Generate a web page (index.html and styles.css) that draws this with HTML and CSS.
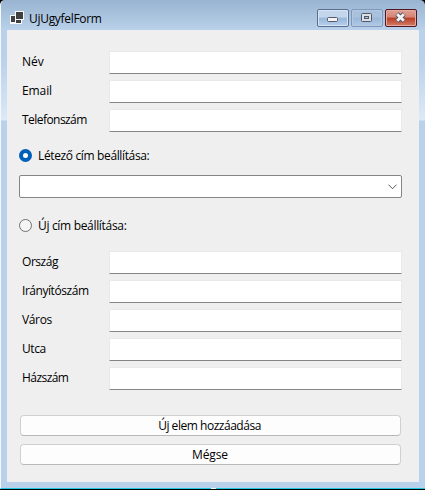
FILE: index.html
```html
<!DOCTYPE html>
<html lang="hu">
<head>
<meta charset="utf-8">
<title>UjUgyfelForm</title>
<link rel="stylesheet" href="styles.css">
</head>
<body>
<div class="window">
  <header class="titlebar">
    <svg class="app-icon" width="14" height="14" viewBox="0 0 14 14" shape-rendering="crispEdges">
      <path fill="#f6f8fb" d="M5 0h9v9h-2v4H0V4h5z"/>
      <path fill="#3f3f3f" d="M6 1h7v7H6zM1 5h4v6H1zM6 9h5v3H6z"/>
    </svg>
    <h1 class="title"><span class="fit t-title">UjUgyfelForm</span></h1>
    <div class="caption-buttons">
      <button class="cap" aria-label="Kis méret"><svg width="30" height="16" viewBox="0 0 30 16"><rect x="9.500" y="7.500" width="10" height="4" rx="1" fill="#f4f4f4" stroke="#555b6b"/></svg></button>
      <button class="cap cap-off" aria-label="Teljes méret"><svg width="30" height="16" viewBox="0 0 30 16"><rect x="9.500" y="3.500" width="10" height="8" rx="1" fill="#dcdfe4" stroke="#515968"/><rect x="12.500" y="6.500" width="4" height="2" fill="#a8c0dc" stroke="#515968"/></svg></button>
      <button class="cap cap-close" aria-label="Bezárás"><svg width="30" height="16" viewBox="0 0 30 16"><path d="M11 4l7 7M18 4l-7 7" stroke="#555a66" stroke-width="4.600"/><path d="M11.200 4.200l6.600 6.600M17.800 4.200l-6.600 6.600" stroke="#f3f3f3" stroke-width="2.800"/></svg></button>
    </div>
  </header>
  <main class="client">
    <div class="fields">
      <label class="row"><span class="name"><span class="fit">Név</span></span><input class="box"></label>
      <label class="row"><span class="name"><span class="fit t-email">Email</span></span><input class="box"></label>
      <label class="row"><span class="name"><span class="fit t-tel">Telefonszám</span></span><input class="box"></label>
    </div>
    <label class="choice choice-old"><span class="radio radio-on"></span><span class="fit t-old">Létező cím beállítása:</span></label>
    <div class="combo"><svg width="9" height="6" viewBox="0 0 9 6"><path d="M.5.700l4 4 4-4" fill="none" stroke="#555"/></svg></div>
    <label class="choice choice-new"><span class="radio"></span><span class="fit t-new">Új cím beállítása:</span></label>
    <div class="fields">
      <label class="row"><span class="name"><span class="fit t-orszag">Ország</span></span><input class="box"></label>
      <label class="row"><span class="name"><span class="fit t-irsz">Irányítószám</span></span><input class="box"></label>
      <label class="row"><span class="name"><span class="fit t-varos">Város</span></span><input class="box"></label>
      <label class="row"><span class="name"><span class="fit t-utca">Utca</span></span><input class="box"></label>
      <label class="row"><span class="name"><span class="fit t-haz">Házszám</span></span><input class="box"></label>
    </div>
    <div class="actions">
      <button class="action"><span class="fit t-add">Új elem hozzáadása</span></button>
      <button class="action"><span class="fit t-cancel">Mégse</span></button>
    </div>
  </main>
  <span class="grip"></span>
</div>
</body>
</html>
```
FILE: styles.css
```css
* { box-sizing: border-box; }
body { margin: 0; background: #000; }
.window {
  position: relative;
  width: 425px;
  height: 489px;
  padding: 1px 6px 6px;
  border-bottom: 1px solid #20c8e0;
  border-left: 1px solid #f4f8fc;
  border-radius: 5px 5px 0 0;
  background: linear-gradient(#99b4d1 0, #b9d1ea 30px, #b9d1ea 60px, #dce9f7 120px, #b9d1ea 121px);
  font: 12px/16px "Open Sans", "Noto Sans", sans-serif;
  color: #000;
}
.titlebar { display: flex; height: 29px; padding: 8px 2px 0 3px; }
.app-icon { margin-top: 2px; }
.title { flex: 1; margin: 2px 0 0 5px; font: inherit; }
.caption-buttons { display: flex; gap: 2px; }
.cap {
  width: 32px;
  height: 18px;
  padding: 0;
  border: 1px solid #5b6e91;
  border-radius: 2px;
  background: linear-gradient(#c3d6eb 0 45%, #98b6d8 50%, #b5d0ec);
  box-shadow: inset 0 0 0 1px #d5e4f3;
}
.cap svg { display: block; }
.cap-off { border-color: #7e98bb; box-shadow: inset 0 0 0 1px #b5cae1; background: linear-gradient(#a9c1dc 0 45%, #98b6d8 50%, #b0cae6); }
.cap-close { border-color: #4e1722; background: linear-gradient(#e0a196 0, #d58373 45%, #b93d25 50%, #d47d66); box-shadow: inset 0 0 0 1px #e5aaa0; }
.client { height: 452px; padding: 21px 17px 0 12px; background: #efefef; }
.fields { display: flex; flex-direction: column; gap: 6px; padding-left: 3px; }
.row { display: flex; height: 23px; }
.name { width: 87px; padding-top: 3px; }
.fit { display: inline-block; white-space: nowrap; }
.t-title { letter-spacing: -.3px; }
.t-email { letter-spacing: -.1px; }
.t-tel { letter-spacing: -.55px; }
.t-old { letter-spacing: -.36px; }
.t-new { letter-spacing: -.32px; }
.t-orszag { letter-spacing: -.45px; }
.t-irsz { letter-spacing: -.45px; }
.t-varos { letter-spacing: -.35px; }
.t-utca { letter-spacing: -.4px; }
.t-haz { letter-spacing: -.55px; }
.t-add { margin-right: 2px; letter-spacing: -.47px; }
.t-cancel { margin-right: 1px; letter-spacing: -.1px; }
.box {
  flex: 1;
  min-width: 0;
  padding: 0;
  border: 1px solid #e9e9e9;
  border-bottom-color: #858585;
  border-radius: 1px;
  background: #fff;
}
.choice { display: flex; align-items: flex-start; gap: 6px; height: 15px; }
.choice-old { margin-top: 16px; }
.choice-new { margin: 20px 0 18px; }
.radio { width: 13px; height: 13px; margin-top: 1px; border: 1px solid #707070; border-radius: 50%; background: #f5f5f5; }
.radio-on { border: 4px solid #005fb8; background: #fff; }
.combo {
  display: flex;
  align-items: center;
  justify-content: flex-end;
  width: 383px;
  height: 23px;
  margin-top: 12px;
  padding-right: 4px;
  border: 1px solid #858585;
  border-radius: 2px;
  background: #fff;
}
.actions { display: flex; flex-direction: column; gap: 8px; margin-top: 25px; padding: 0 1px; }
.action {
  height: 21px;
  padding: 1px 0 0;
  border: 1px solid #d0d0d0;
  border-bottom-color: #b8b8b8;
  border-radius: 4px;
  background: #fdfdfd;
  font: inherit;
  line-height: 18px;
  color: #000;
}
.grip { position: absolute; left: 210px; bottom: -2px; width: 5px; height: 2px; background: #fff; }
```
